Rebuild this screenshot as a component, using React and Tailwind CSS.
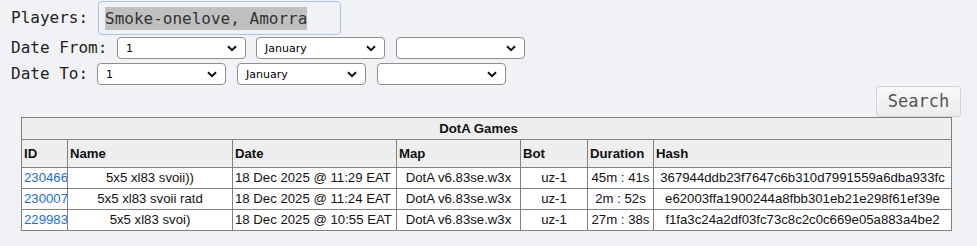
import React from 'react';

const games = [
  { id: '230466', name: '5x5 xl83 svoii))', date: '18 Dec 2025 @ 11:29 EAT', map: 'DotA v6.83se.w3x', bot: 'uz-1', duration: '45m : 41s', hash: '367944ddb23f7647c6b310d7991559a6dba933fc' },
  { id: '230007', name: '5x5 xl83 svoii ratd', date: '18 Dec 2025 @ 11:24 EAT', map: 'DotA v6.83se.w3x', bot: 'uz-1', duration: '2m : 52s', hash: 'e62003ffa1900244a8fbb301eb21e298f61ef39e' },
  { id: '229983', name: '5x5 xl83 svoi)', date: '18 Dec 2025 @ 10:55 EAT', map: 'DotA v6.83se.w3x', bot: 'uz-1', duration: '27m : 38s', hash: 'f1fa3c24a2df03fc73c8c2c0c669e05a883a4be2' },
];

const Chevron = () => (
  <svg width="10" height="7" viewBox="0 0 10 7" className="shrink-0">
    <path d="M1 1.2 L5 5.2 L9 1.2" fill="none" stroke="#111" strokeWidth="2" />
  </svg>
);

const FakeSelect = ({ value = '', className = '' }) => (
  <div
    className={`flex h-[22px] w-[129px] shrink-0 items-center justify-between rounded-[4px] border border-[#8f8f8f] bg-white pl-[8px] pr-[8px] text-[11px] text-black ${className}`}
    style={{ fontFamily: 'Verdana, "DejaVu Sans", sans-serif' }}
  >
    <span className="leading-none">{value}</span>
    <Chevron />
  </div>
);

const App = () => {
  const cell = 'border border-[#808080] px-[2px] overflow-hidden';

  return (
    <div
      className="min-h-[246px] w-full bg-[#f1f2f6] text-[#222]"
      style={{ fontFamily: '"DejaVu Sans Mono", monospace' }}
    >
      <div className="flex items-center pl-[11px] pt-[1px]">
        <span className="w-[87px] shrink-0 whitespace-nowrap text-[16px] text-[#222]">Players:</span>
        <div className="flex h-[34px] w-[243px] shrink-0 items-center rounded-[4px] border border-[#a9c3e6] bg-[#f1f2f6] pl-[6px]">
          <span className="whitespace-nowrap bg-[#c0c0c0] text-[16px] leading-[23px] text-[#333]">Smoke-onelove, Amorra</span>
        </div>
      </div>

      <div className="mt-[2px] flex items-center gap-[10px] pl-[11px]">
        <span className="w-[96px] shrink-0 whitespace-nowrap text-[16px] leading-[22px]">Date From:</span>
        <FakeSelect value="1" />
        <FakeSelect value="January" />
        <FakeSelect className="ml-[1px]" />
      </div>

      <div className="mt-[4px] flex items-center gap-[10px] pl-[11px]">
        <span className="w-[76px] shrink-0 whitespace-nowrap text-[16px] leading-[22px]">Date To:</span>
        <FakeSelect value="1" />
        <FakeSelect value="January" className="ml-[1px]" />
        <FakeSelect className="ml-[1px]" />
      </div>

      <div className="flex justify-end pr-[16px] pt-[1px]">
        <button className="h-[31px] w-[85px] rounded-[3px] border border-[#d0d3d9] bg-gradient-to-b from-[#f8f8f8] to-[#ececec] text-[17px] text-[#555]">
          Search
        </button>
      </div>

      <table
        className="ml-[21px] w-[930px] table-fixed border-collapse border border-[#808080] text-[13.2px] text-[#111]"
        style={{ fontFamily: '"Liberation Sans", Arial, sans-serif' }}
      >
        <colgroup>
          <col className="w-[46px]" />
          <col className="w-[165px]" />
          <col className="w-[164px]" />
          <col className="w-[124px]" />
          <col className="w-[67px]" />
          <col className="w-[66px]" />
          <col className="w-[298px]" />
        </colgroup>
        <thead>
          <tr className="bg-[#eeeeee]">
            <th colSpan={7} className={`${cell} h-[22px] pr-[18px] text-center font-bold`}>DotA Games</th>
          </tr>
          <tr className="bg-[#eeeeee]">
            <th className={`${cell} h-[28px] text-left font-bold`}>ID</th>
            <th className={`${cell} text-left font-bold`}>Name</th>
            <th className={`${cell} text-left font-bold`}>Date</th>
            <th className={`${cell} text-left font-bold`}>Map</th>
            <th className={`${cell} text-left font-bold`}>Bot</th>
            <th className={`${cell} text-left font-bold`}>Duration</th>
            <th className={`${cell} text-left font-bold`}>Hash</th>
          </tr>
        </thead>
        <tbody className="bg-white">
          {games.map((g) => (
            <tr key={g.id}>
              <td className={`${cell} h-[21px] text-left`}>
                <a href="#" className="text-[#1a6fd6]">{g.id}</a>
              </td>
              <td className={`${cell} text-center`}>{g.name}</td>
              <td className={`${cell} whitespace-nowrap text-left`}>{g.date}</td>
              <td className={`${cell} whitespace-nowrap text-center`}>{g.map}</td>
              <td className={`${cell} text-center`}>{g.bot}</td>
              <td className={`${cell} whitespace-nowrap text-center`}>{g.duration}</td>
              <td className={`${cell} whitespace-nowrap text-center`}>{g.hash}</td>
            </tr>
          ))}
        </tbody>
      </table>
    </div>
  );
};

export default App;
